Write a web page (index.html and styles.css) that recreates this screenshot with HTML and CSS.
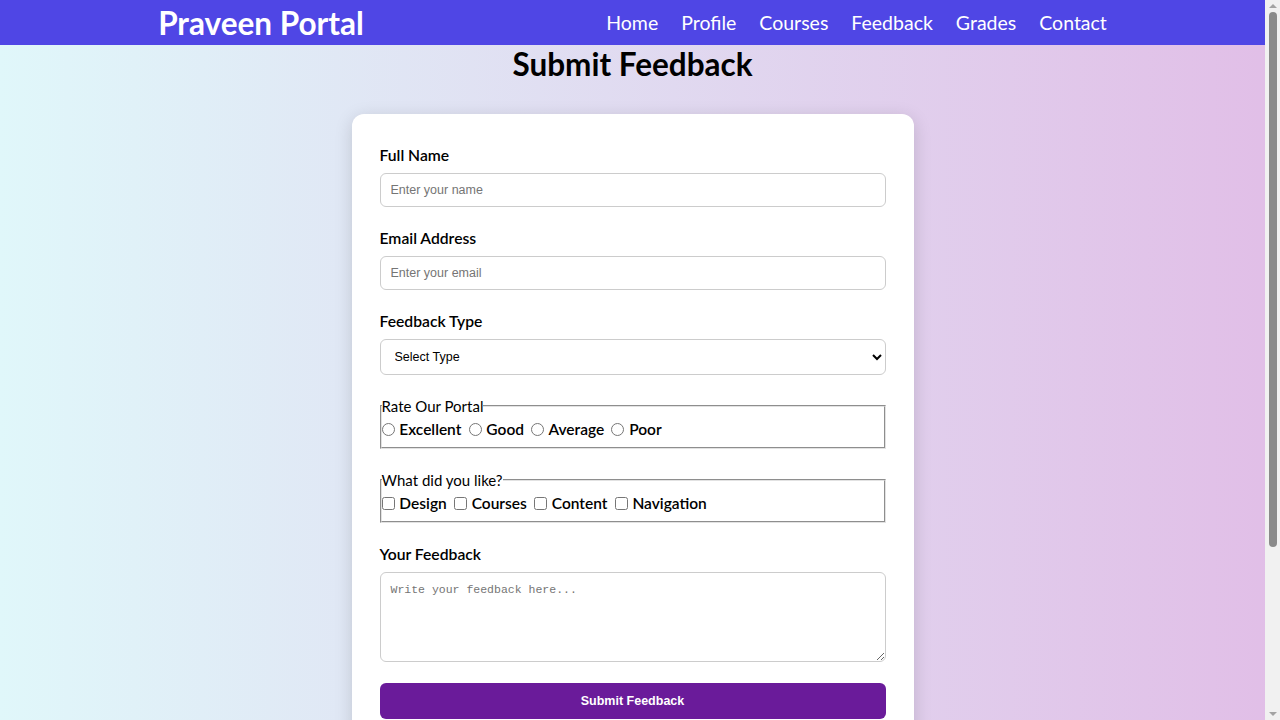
FILE: index.html
```html
<!DOCTYPE html>
<html lang="en">
<head>
    <meta charset="UTF-8">
    <meta name="viewport" content="width=device-width, initial-scale=1.0">
    <title>Feedback - Praveen Portal</title>
    <link rel="stylesheet" href="styles.css">
</head>
<body>
    <header class="navbar">
        <div class="navInner">
            <div class="logo">Praveen Portal</div>
            <nav class="navLinks">
                <a href="#">Home</a>
                <a href="#">Profile</a>
                <a href="#">Courses</a>
                <a href="#">Feedback</a>
                <a href="#">Grades</a>
                <a href="#">Contact</a>
            </nav>
        </div>
    </header>

    <main>
        <h2 class="pageTitle">Submit Feedback</h2>

        <form class="feedbackCard">
            <div class="formGroup">
                <label class="fieldLabel" for="name">Full Name</label>
                <input type="text" id="name" placeholder="Enter your name">
            </div>

            <div class="formGroup">
                <label class="fieldLabel" for="email">Email Address</label>
                <input type="email" id="email" placeholder="Enter your email">
            </div>

            <div class="formGroup">
                <label class="fieldLabel" for="type">Feedback Type</label>
                <select id="type">
                    <option>Select Type</option>
                    <option>Suggestion</option>
                    <option>Complaint</option>
                    <option>Appreciation</option>
                </select>
            </div>

            <fieldset class="formGroup choiceSet">
                <legend>Rate Our Portal</legend>
                <label class="choice"><input type="radio" name="rate"> Excellent</label>
                <label class="choice"><input type="radio" name="rate"> Good</label>
                <label class="choice"><input type="radio" name="rate"> Average</label>
                <label class="choice"><input type="radio" name="rate"> Poor</label>
            </fieldset>

            <fieldset class="formGroup choiceSet">
                <legend>What did you like?</legend>
                <label class="choice"><input type="checkbox"> Design</label>
                <label class="choice"><input type="checkbox"> Courses</label>
                <label class="choice"><input type="checkbox"> Content</label>
                <label class="choice"><input type="checkbox"> Navigation</label>
            </fieldset>

            <div class="formGroup">
                <label class="fieldLabel" for="message">Your Feedback</label>
                <textarea id="message" placeholder="Write your feedback here..."></textarea>
            </div>

            <button type="submit" class="submitBtn">Submit Feedback</button>
        </form>
    </main>

    <!-- browser scrollbar as seen in the screenshot -->
    <div class="scrollbar">
        <span class="arrow up"></span>
        <span class="thumb"></span>
        <span class="arrow down"></span>
    </div>
</body>
</html>
```

FILE: styles.css
```css
/* page background & base font */
body {
    margin: 0 15px 0 0;
    font-family: "Segoe UI", Lato, sans-serif;
    background: linear-gradient(to right, #e0f7fa, #e1bee7);
    color: #000;
}

/* top navigation bar */
.navbar {
    background-color: #4f46e5;
    height: 45px;
}

.navInner {
    width: 75%;
    margin: 0 auto;
    height: 100%;
    display: flex;
    align-items: center;
    justify-content: space-between;
}

.logo {
    color: #fff;
    font-size: 31.5px;
    font-weight: 700;
}

.navLinks {
    display: flex;
    gap: 23px;
}

.navLinks a {
    color: #fff;
    text-decoration: none;
    font-size: 19.5px;
}

/* page heading */
.pageTitle {
    margin: 0 0 31px;
    text-align: center;
    font-size: 31.5px;
    line-height: 38px;
    font-weight: 700;
}

/* the white form card */
.feedbackCard {
    width: 562px;
    box-sizing: border-box;
    margin: 0 auto 40px;
    padding: 31px 28px 30px;
    background-color: #fff;
    border-radius: 12px;
    box-shadow: 0 4px 18px rgba(0, 0, 0, 0.15);
}

.formGroup {
    margin: 0 0 21px;
}

.fieldLabel {
    display: block;
    font-size: 15.7px;
    line-height: 21px;
    font-weight: 600;
    margin-bottom: 7px;
}

/* text inputs, select & textarea */
input[type="text"],
input[type="email"],
select,
textarea {
    display: block;
    width: 100%;
    box-sizing: border-box;
    border: 1px solid #ccc;
    border-radius: 6px;
    background-color: #fff;
}

input[type="text"],
input[type="email"] {
    height: 34px;
    padding: 0 10px;
    font-family: Arial, "Liberation Sans", sans-serif;
    font-size: 12.5px;
}

select {
    height: 36px;
    padding: 0 10px;
    font-family: Arial, "Liberation Sans", sans-serif;
    font-size: 12.5px;
    color: #000;
}

textarea {
    height: 90px;
    padding: 10px;
    font-family: "Liberation Mono", monospace;
    font-size: 11.5px;
    resize: vertical;
}

::placeholder {
    color: #757575;
}

/* radio & checkbox groups */
.choiceSet {
    padding: 2px 0 7px;
    border: 2px groove #e2e2e2;
    min-width: 0;
}

.choiceSet legend {
    padding: 0;
    font-size: 15px;
    line-height: 20px;
}

.choice {
    font-size: 15.5px;
    line-height: 22px;
    font-weight: 600;
    margin-right: 3px;
}

.choice input {
    margin: 0 1px 0 0;
    width: 13px;
    height: 13px;
    vertical-align: -1px;
}

/* submit button */
.submitBtn {
    display: block;
    width: 100%;
    height: 36px;
    border: none;
    border-radius: 6px;
    background-color: #6a1b9a;
    color: #fff;
    font-family: Arial, "Liberation Sans", sans-serif;
    font-size: 12.5px;
    font-weight: 700;
    cursor: pointer;
}

/* fake classic scrollbar on the right edge */
.scrollbar {
    position: fixed;
    top: 0;
    right: 0;
    width: 15px;
    height: 100%;
    background-color: #f1f1f1;
    display: flex;
    flex-direction: column;
    align-items: center;
}

.thumb {
    width: 8px;
    height: 535px;
    margin-top: 4px;
    border-radius: 4px;
    background-color: #8a8a8a;
}

.arrow {
    width: 0;
    height: 0;
    border-left: 4px solid transparent;
    border-right: 4px solid transparent;
}

.arrow.up {
    margin-top: 4px;
    border-bottom: 4px solid #a3a3a3;
}

.arrow.down {
    margin-top: auto;
    margin-bottom: 4px;
    border-top: 4px solid #a3a3a3;
}
```
